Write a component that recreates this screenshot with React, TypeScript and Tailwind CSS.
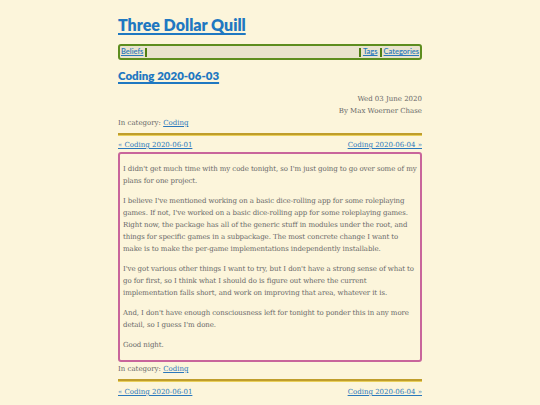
const sans = "font-['Lato','Open_Sans',sans-serif]";
const serif = "font-['DejaVu_Serif','Liberation_Serif',serif]";
const link = 'text-[#2a77bb] underline';

function PrevNext() {
    return (
        <div className={`flex justify-between text-[7px] leading-[12px] ${serif}`}>
            <a href="#" className={link}>« Coding 2020-06-01</a>
            <a href="#" className={link}>Coding 2020-06-04 »</a>
        </div>
    );
}

function Category() {
    return (
        <p className={`text-[7px] leading-[12px] text-[#686868] ${serif}`}>
            In category: <a href="#" className={link}>Coding</a>
        </p>
    );
}

function Rule() {
    return <div className="h-[3px] border-t-2 border-[#bf9d2c] bg-[#e9cf5a]" />;
}

const paragraphs = [
    "I didn't get much time with my code tonight, so I'm just going to go over some of my plans for one project.",
    "I believe I've mentioned working on a basic dice-rolling app for some roleplaying games. If not, I've worked on a basic dice-rolling app for some roleplaying games. Right now, the package has all of the generic stuff in modules under the root, and things for specific games in a subpackage. The most concrete change I want to make is to make the per-game implementations independently installable.",
    "I've got various other things I want to try, but I don't have a strong sense of what to go for first, so I think what I should do is figure out where the current implementation falls short, and work on improving that area, whatever it is.",
    "And, I don't have enough consciousness left for tonight to ponder this in any more detail, so I guess I'm done.",
    'Good night.',
];

export default function App() {
    return (
        <div className="min-h-screen bg-[#fcf5db]">
            <div className="mx-auto w-[304px] pt-[15px]">
                <h1 className={`text-[16px] leading-[20px] font-extrabold ${sans}`}>
                    <a href="#" className="text-[#1f78c1] underline decoration-2 underline-offset-2">Three Dollar Quill</a>
                </h1>

                <nav className={`mt-[9px] flex h-[16px] items-center rounded-[3px] border-2 border-[#5d8d1f] bg-[#e9e3cd] px-[1px] text-[7.5px] leading-[8px] font-semibold ${sans}`}>
                    <a href="#" className={`${link} pr-[2px]`}>Beliefs</a>
                    <div className="h-[9px] flex-1 border-x-2 border-[#4f7e14]" />
                    <a href="#" className={`${link} px-[2px]`}>Tags</a>
                    <span className="h-[9px] border-l-2 border-[#4f7e14]" />
                    <a href="#" className={`${link} pl-[2px]`}>Categories</a>
                </nav>

                <h2 className={`mt-[8px] text-[11.5px] leading-[16px] font-extrabold ${sans}`}>
                    <a href="#" className="text-[#1f78c1] underline decoration-[1.5px] underline-offset-2">Coding 2020-06-03</a>
                </h2>

                <div className={`mt-[9px] text-right text-[7px] leading-[12px] text-[#686868] ${serif}`}>
                    <p>Wed 03 June 2020</p>
                    <p>By Max Woerner Chase</p>
                </div>
                <Category />
                <div className="mt-[4px]"><Rule /></div>
                <div className="mt-[3px]"><PrevNext /></div>

                <div className={`mt-[1px] rounded-[3px] border-2 border-[#c8659b] px-[3px] py-[1px] text-[7px] leading-[12px] tracking-[-0.08px] text-[#686868] ${serif}`}>
                    {paragraphs.map((p, i) => (
                        <p key={i} className="my-[8px]">{p}</p>
                    ))}
                </div>

                <div className="mt-[1px]"><Category /></div>
                <div className="mt-[4px]"><Rule /></div>
                <div className="mt-[4px]"><PrevNext /></div>
            </div>
        </div>
    );
}
